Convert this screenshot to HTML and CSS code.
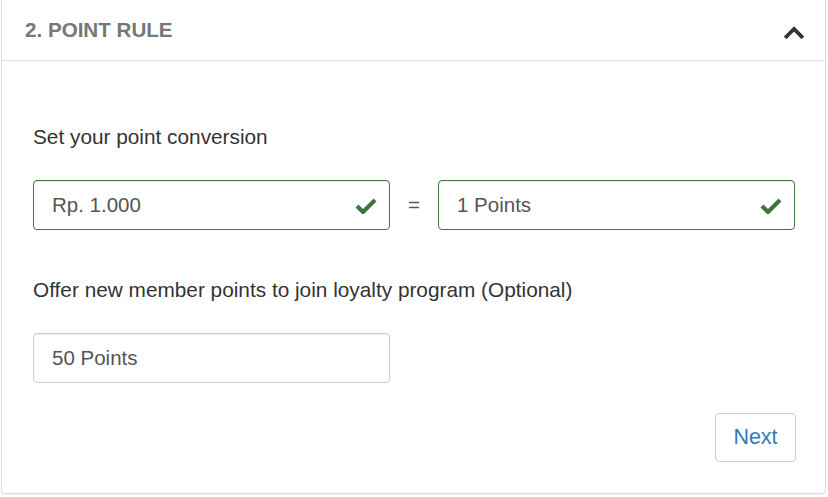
FILE: index.html
```html
<!DOCTYPE html>
<html>
<head>
<meta charset="utf-8">
<link rel="stylesheet" href="styles.css">
</head>
<body>
<div class="panel">
  <div class="panel-head">
    <span class="panel-title">2. POINT RULE</span>
    <svg class="chevron" width="20" height="14" viewBox="0 0 20 14"><path d="M2.5 11.5 L10 4 L17.5 11.5" fill="none" stroke="#333" stroke-width="3.8" stroke-linecap="square"/></svg>
  </div>
  <div class="panel-body">
    <div class="label label-first">Set your point conversion</div>
    <div class="conv-row">
      <div class="field valid">
        <span>Rp. 1.000</span>
        <svg class="check" width="22" height="17" viewBox="0 0 22 17"><path d="M2 9 L8 15 L20 3" fill="none" stroke="#3c763d" stroke-width="4.2" stroke-linejoin="miter"/></svg>
      </div>
      <span class="eq">=</span>
      <div class="field valid">
        <span>1 Points</span>
        <svg class="check" width="22" height="17" viewBox="0 0 22 17"><path d="M2 9 L8 15 L20 3" fill="none" stroke="#3c763d" stroke-width="4.2" stroke-linejoin="miter"/></svg>
      </div>
    </div>
    <div class="label label-second">Offer new member points to join loyalty program (Optional)</div>
    <div class="field plain"><span>50 Points</span></div>
    <div class="actions">
      <button class="btn-next">Next</button>
    </div>
  </div>
</div>
</body>
</html>
```

FILE: styles.css
```css
html, body {
  margin: 0;
  padding: 0;
  background: #ffffff;
}
body {
  font-family: "Liberation Sans", Arial, sans-serif;
  color: #333333;
  width: 828px;
  height: 497px;
  overflow: hidden;
}
.panel {
  margin-left: 1px;
  margin-top: -6px;
  width: 823px;
  border: 1px solid #dddddd;
  border-radius: 4px;
  box-shadow: 0 1px 1px rgba(0,0,0,0.05);
  background: #fff;
}
.panel-head {
  height: 66px;
  box-sizing: border-box;
  padding-top: 5px;
  border-bottom: 1px solid #dddddd;
  display: flex;
  align-items: center;
  justify-content: space-between;
  padding-left: 23px;
  padding-right: 21px;
}
.panel-title {
  font-size: 20.6px;
  font-weight: bold;
  color: #777777;
}
.chevron {
  display: block;
  margin-top: 3px;
}
.panel-body {
  padding: 0 29px 31px 31px;
}
.label {
  font-size: 20.8px;
  line-height: 25px;
  color: #333;
}
.label-first {
  margin-top: 63px;
  margin-bottom: 31px;
}
.label-second {
  margin-top: 47px;
  margin-bottom: 31px;
}
.conv-row {
  display: flex;
  align-items: center;
}
.eq {
  width: 48px;
  text-align: center;
  font-size: 20.5px;
  color: #555;
}
.field {
  width: 357px;
  height: 50px;
  box-sizing: border-box;
  border: 1px solid #cccccc;
  border-radius: 4px;
  display: flex;
  align-items: center;
  justify-content: space-between;
  padding: 0 12px 0 18px;
  font-size: 20.5px;
  color: #555555;
  box-shadow: inset 0 1px 1px rgba(0,0,0,0.075);
}
.field.valid {
  border-color: #3c763d;
}
.check {
  display: block;
}
.actions {
  display: flex;
  justify-content: flex-end;
  margin-top: 30px;
}
.btn-next {
  width: 81px;
  height: 49px;
  border: 1px solid #cccccc;
  border-radius: 4px;
  background: #fff;
  color: #337ab7;
  font-family: "Liberation Sans", Arial, sans-serif;
  font-size: 21.5px;
  padding: 0;
}
```
